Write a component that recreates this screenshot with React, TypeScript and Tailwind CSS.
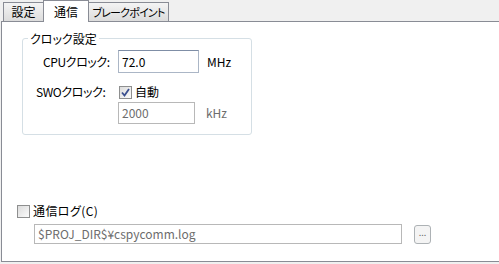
import type { ReactNode } from 'react'

// Shared font: Japanese UI text with proportional kana
const font = "font-['Noto_Sans_CJK_JP',sans-serif] [font-feature-settings:'palt'] text-[12px] leading-[14px]"

function Tab({ label, active = false, className }: { label: string; active?: boolean; className: string }) {
  if (active) {
    return (
      <div
        className={`relative z-10 -mb-px -ml-px flex h-[22px] items-center justify-center whitespace-nowrap border border-b-0 border-[#898c95] bg-white text-black ${className}`}
      >
        {label}
      </div>
    )
  }
  return (
    <div
      className={`-ml-px flex h-[19px] items-center justify-center whitespace-nowrap border border-b-0 border-[#898c95] bg-linear-to-b from-[#f4f4f4] to-[#dcdcdc] text-black first:ml-0 ${className}`}
    >
      {label}
    </div>
  )
}

function CheckBox({ checked = false }: { checked?: boolean }) {
  return (
    <span className="flex h-[13px] w-[13px] shrink-0 items-center justify-center border border-[#8e8f8f] bg-linear-to-br from-[#dcdcdc] to-[#fbfbfb]">
      {checked && (
        <svg width="9" height="9" viewBox="0 0 9 9">
          <path d="M1 4.5 L3.5 7.5 L8 1" fill="none" stroke="#3a4f8f" strokeWidth="1.8" />
        </svg>
      )}
    </span>
  )
}

function Field({ value, width, height, disabled = false }: { value: string; width: string; height: string; disabled?: boolean }) {
  return (
    <div
      className={`flex items-center whitespace-nowrap border bg-white px-[3px] ${width} ${height} ${
        disabled
          ? 'border-[#b8b8b8] text-[#6d6d6d]'
          : 'border-[#abb6c6] border-t-[#7f8ea6] text-black'
      }`}
    >
      {value}
    </div>
  )
}

function Row({ children, className = '' }: { children: ReactNode; className?: string }) {
  return <div className={`flex items-center ${className}`}>{children}</div>
}

export default function App() {
  return (
    <div className={`h-[264px] w-[499px] overflow-hidden bg-[#f0f0f0] ${font}`}>
      {/* tab strip */}
      <div className="flex h-[21px] items-end pl-[3px]">
        <Tab label="設定" className="w-[41px]" />
        <Tab label="通信" className="w-[46px]" active />
        <Tab label="ブレークポイント" className="w-[81px] text-[11px] tracking-[-0.8px]" />
      </div>

      {/* tab page */}
      <div className="ml-px flex h-[241px] w-[499px] flex-col border border-[#898c95] bg-white">
        {/* clock group */}
        <div className="relative ml-[20px] mt-[16px] h-[97px] w-[230px] rounded-[3px] border border-[#d5dfe5]">
          <span className="absolute -top-[7px] left-[5px] bg-white px-[2px]">クロック設定</span>

          <Row className="mt-[11px]">
            <span className="ml-[20px] w-[75px] tracking-[-0.4px]">CPUクロック:</span>
            <Field value="72.0" width="w-[81px]" height="h-[23px]" />
            <span className="ml-[8px]">MHz</span>
          </Row>

          <Row className="mt-[12px]">
            <span className="ml-[13px] w-[83px] tracking-[-0.4px]">SWOクロック:</span>
            <CheckBox checked />
            <span className="ml-[3px]">自動</span>
          </Row>

          <Row className="mt-[3px]">
            <span className="ml-[95px]" />
            <Field value="2000" width="w-[77px]" height="h-[22px]" disabled />
            <span className="ml-[11px] text-[#6d6d6d]">kHz</span>
          </Row>
        </div>

        {/* communication log */}
        <Row className="ml-[15px] mt-[69px]">
          <CheckBox />
          <span className="ml-[3px] tracking-[0.4px]">通信ログ(C)</span>
        </Row>
        <Row className="ml-[32px] mt-[6px]">
          <Field value="$PROJ_DIR$¥cspycomm.log" width="w-[368px]" height="h-[20px]" disabled />
          <div className="ml-[12px] flex h-[19px] w-[17px] items-center justify-center rounded-[3px] border border-[#adb2b5] bg-[#f4f4f4] pb-[3px] text-[9px] text-[#6d6d6d]">
            ...
          </div>
        </Row>
      </div>
    </div>
  )
}
